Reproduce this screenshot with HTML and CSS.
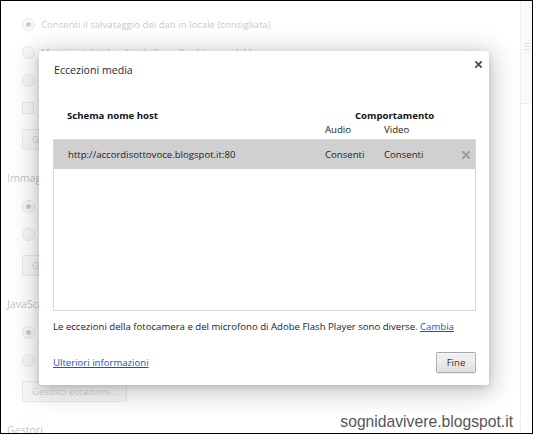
FILE: index.html
```html
<!DOCTYPE html>
<html lang="it">
<head>
<meta charset="utf-8">
<title>Eccezioni media</title>
<link rel="stylesheet" href="styles.css">
</head>
<body>
<div class="frame">
  <div class="page">
    <main class="settings">
      <div class="opt"><span class="radio on"></span><span>Consenti il salvataggio dei dati in locale (consigliata)</span></div>
      <div class="opt"><span class="radio"></span><span>Mantieni i dati locali solo fino alla chiusura del browser</span></div>
      <div class="opt"><span class="radio"></span><span>Impedisci ai siti di impostare dati</span></div>
      <div class="opt"><span class="check"></span><span>Blocca cookie di terze parti e dati dei siti</span></div>
      <div class="btnrow"><span class="sbtn">Gestisci eccezioni...</span></div>
      <h3 class="sec">Immagini</h3>
      <div class="opt"><span class="radio on"></span><span>Mostra tutte le immagini (consigliata)</span></div>
      <div class="opt"><span class="radio"></span><span>Non mostrare immagini</span></div>
      <div class="btnrow"><span class="sbtn">Gestisci eccezioni...</span></div>
      <h3 class="sec">JavaScript</h3>
      <div class="opt"><span class="radio on"></span><span>Consenti a tutti i siti di eseguire JavaScript (consigliata)</span></div>
      <div class="opt"><span class="radio"></span><span>Non consentire ad alcun sito di eseguire JavaScript</span></div>
      <div class="btnrow"><span class="sbtn">Gestisci eccezioni...</span></div>
      <h3 class="sec">Gestori</h3>
    </main>
    <div class="scrollbar"><div class="thumb"><span class="grip"></span></div></div>
  </div>

  <div class="overlay">
    <section class="dialog">
      <div class="dlg-head">
        <h1 class="dlg-title">Eccezioni media</h1>
        <svg class="close" viewBox="0 0 7 7" width="7" height="7"><path d="M0.8 0.8L6.2 6.2M6.2 0.8L0.8 6.2" stroke="#4a4a4a" stroke-width="1.7" stroke-linecap="square"/></svg>
      </div>
      <div class="cols">
        <div class="c-host">Schema nome host</div>
        <div class="c-behav">Comportamento</div>
        <div class="c-audio">Audio</div>
        <div class="c-video">Video</div>
      </div>
      <div class="list">
        <div class="row">
          <span class="r-host">http://accordisottovoce.blogspot.it:80</span>
          <span>Consenti</span>
          <span>Consenti</span>
          <svg class="del" viewBox="0 0 8 8" width="8" height="8"><path d="M1 1L7 7M7 1L1 7" stroke="#9a9a9a" stroke-width="1.8" stroke-linecap="square"/></svg>
        </div>
      </div>
      <p class="note">Le eccezioni della fotocamera e del microfono di Adobe Flash Player sono diverse. <a href="#">Cambia</a></p>
      <div class="foot">
        <a href="#">Ulteriori informazioni</a>
        <button class="fine" type="button">Fine</button>
      </div>
    </section>
  </div>

  <div class="watermark">sognidavivere.blogspot.it</div>
</div>
</body>
</html>
```

FILE: styles.css
```css
* { box-sizing: border-box; }

body {
  margin: 0;
  font-family: "Open Sans", "Noto Sans", sans-serif;
}

.frame {
  position: relative;
  width: 533px;
  height: 434px;
  border: 1px solid #000;
  overflow: hidden;
  background: #fff;
}

.page {
  display: flex;
  height: 100%;
}

/* background settings page */
.settings {
  flex: 1;
  padding: 9px 0 0 6px;
  font-size: 9.6px;
  color: #111;
}

.opt {
  display: flex;
  align-items: center;
  gap: 6px;
  height: 28px;
  padding-left: 15px;
  white-space: nowrap;
}

.radio {
  flex: none;
  width: 13px;
  height: 13px;
  border-radius: 50%;
  border: 1px solid rgba(0, 0, 0, 0.3);
  background: linear-gradient(#ededed, #dedede);
  display: flex;
  align-items: center;
  justify-content: center;
}

.radio.on::after {
  content: "";
  width: 5px;
  height: 5px;
  border-radius: 50%;
  background: #333;
}

.check {
  flex: none;
  width: 12px;
  height: 12px;
  border-radius: 2px;
  border: 1px solid rgba(0, 0, 0, 0.3);
  background: linear-gradient(#ededed, #dedede);
}

.btnrow {
  padding-left: 15px;
  margin-top: 7px;
  height: 21px;
}

.sbtn {
  display: inline-flex;
  align-items: center;
  height: 21px;
  padding: 0 9px;
  border: 1px solid rgba(0, 0, 0, 0.25);
  border-radius: 2px;
  background: linear-gradient(#ededed, #ededed 38%, #dedede);
  color: #444;
  white-space: nowrap;
}

.sec {
  margin: 18px 0 4px;
  height: 20px;
  font-size: 10.6px;
  font-weight: normal;
  line-height: 20px;
  color: #000;
}

.scrollbar {
  flex: none;
  width: 12px;
  border-left: 1px solid #c4c4c4;
}

.thumb {
  height: 103px;
  border-bottom: 1px solid #bcbcbc;
  background: linear-gradient(to right, #f0f0f0, #e2e2e2);
  display: flex;
  justify-content: center;
  padding-top: 42px;
}

.grip {
  width: 6px;
  height: 1px;
  background: #888;
  box-shadow: 0 3px 0 #888, 0 6px 0 #888;
}

/* modal overlay */
.overlay {
  position: absolute;
  inset: 0;
  background: rgba(255, 255, 255, 0.75);
  padding: 50px 0 0 38px;
}

.dialog {
  width: 450px;
  height: 334px;
  background: #fff;
  border-radius: 3px;
  box-shadow: 0 4px 23px 5px rgba(0, 0, 0, 0.2), 0 2px 6px rgba(0, 0, 0, 0.15);
  display: flex;
  flex-direction: column;
  padding: 9px 13px 12px 14px;
  font-size: 9.6px;
  color: #222;
}

.dlg-head {
  display: flex;
  justify-content: space-between;
  align-items: flex-start;
  height: 20px;
}

.dlg-title {
  margin: 0;
  padding-left: 1px;
  font-size: 10.6px;
  font-weight: normal;
  line-height: 20px;
  color: #2a2a2a;
}

.close {
  display: block;
  margin-top: 1px;
  margin-right: -6px;
}

.cols {
  display: grid;
  grid-template-columns: 271px 59px 1fr;
  padding-left: 1px;
  margin-top: 29px;
  line-height: 14px;
}

.c-host {
  grid-column: 1;
  grid-row: 1;
  padding-left: 13px;
  font-weight: bold;
  color: #111;
}

.c-behav {
  grid-column: 2 / 4;
  grid-row: 1;
  padding-left: 30px;
  font-weight: bold;
  color: #111;
}

.c-audio { grid-column: 2; grid-row: 2; }
.c-video { grid-column: 3; grid-row: 2; }

.list {
  margin-top: 2px;
  height: 172px;
  border: 1px solid #d9d9d9;
}

.row {
  display: grid;
  grid-template-columns: 271px 59px 1fr 8px;
  align-items: center;
  height: 29px;
  padding-right: 5px;
  background: #d0d0d0;
  color: #222;
}

.r-host { padding-left: 14px; }

.del { display: block; }

.note {
  margin: 9px 0 0;
  line-height: 14px;
  white-space: nowrap;
}

a {
  color: #15c;
  text-decoration: underline;
}

.foot {
  margin-top: 18px;
  display: flex;
  justify-content: space-between;
  align-items: center;
  height: 21px;
}

.fine {
  width: 40px;
  height: 21px;
  padding: 0;
  font: inherit;
  color: #333;
  border: 1px solid rgba(0, 0, 0, 0.25);
  border-radius: 2px;
  background: linear-gradient(#ededed, #ededed 38%, #dedede);
  box-shadow: 0 1px 0 rgba(0, 0, 0, 0.08), inset 0 1px 2px rgba(255, 255, 255, 0.75);
}

.watermark {
  position: absolute;
  top: 412px;
  right: 19px;
  font-family: "Liberation Sans", Arial, sans-serif;
  font-size: 15.7px;
  line-height: 18px;
  color: #555;
}
```
